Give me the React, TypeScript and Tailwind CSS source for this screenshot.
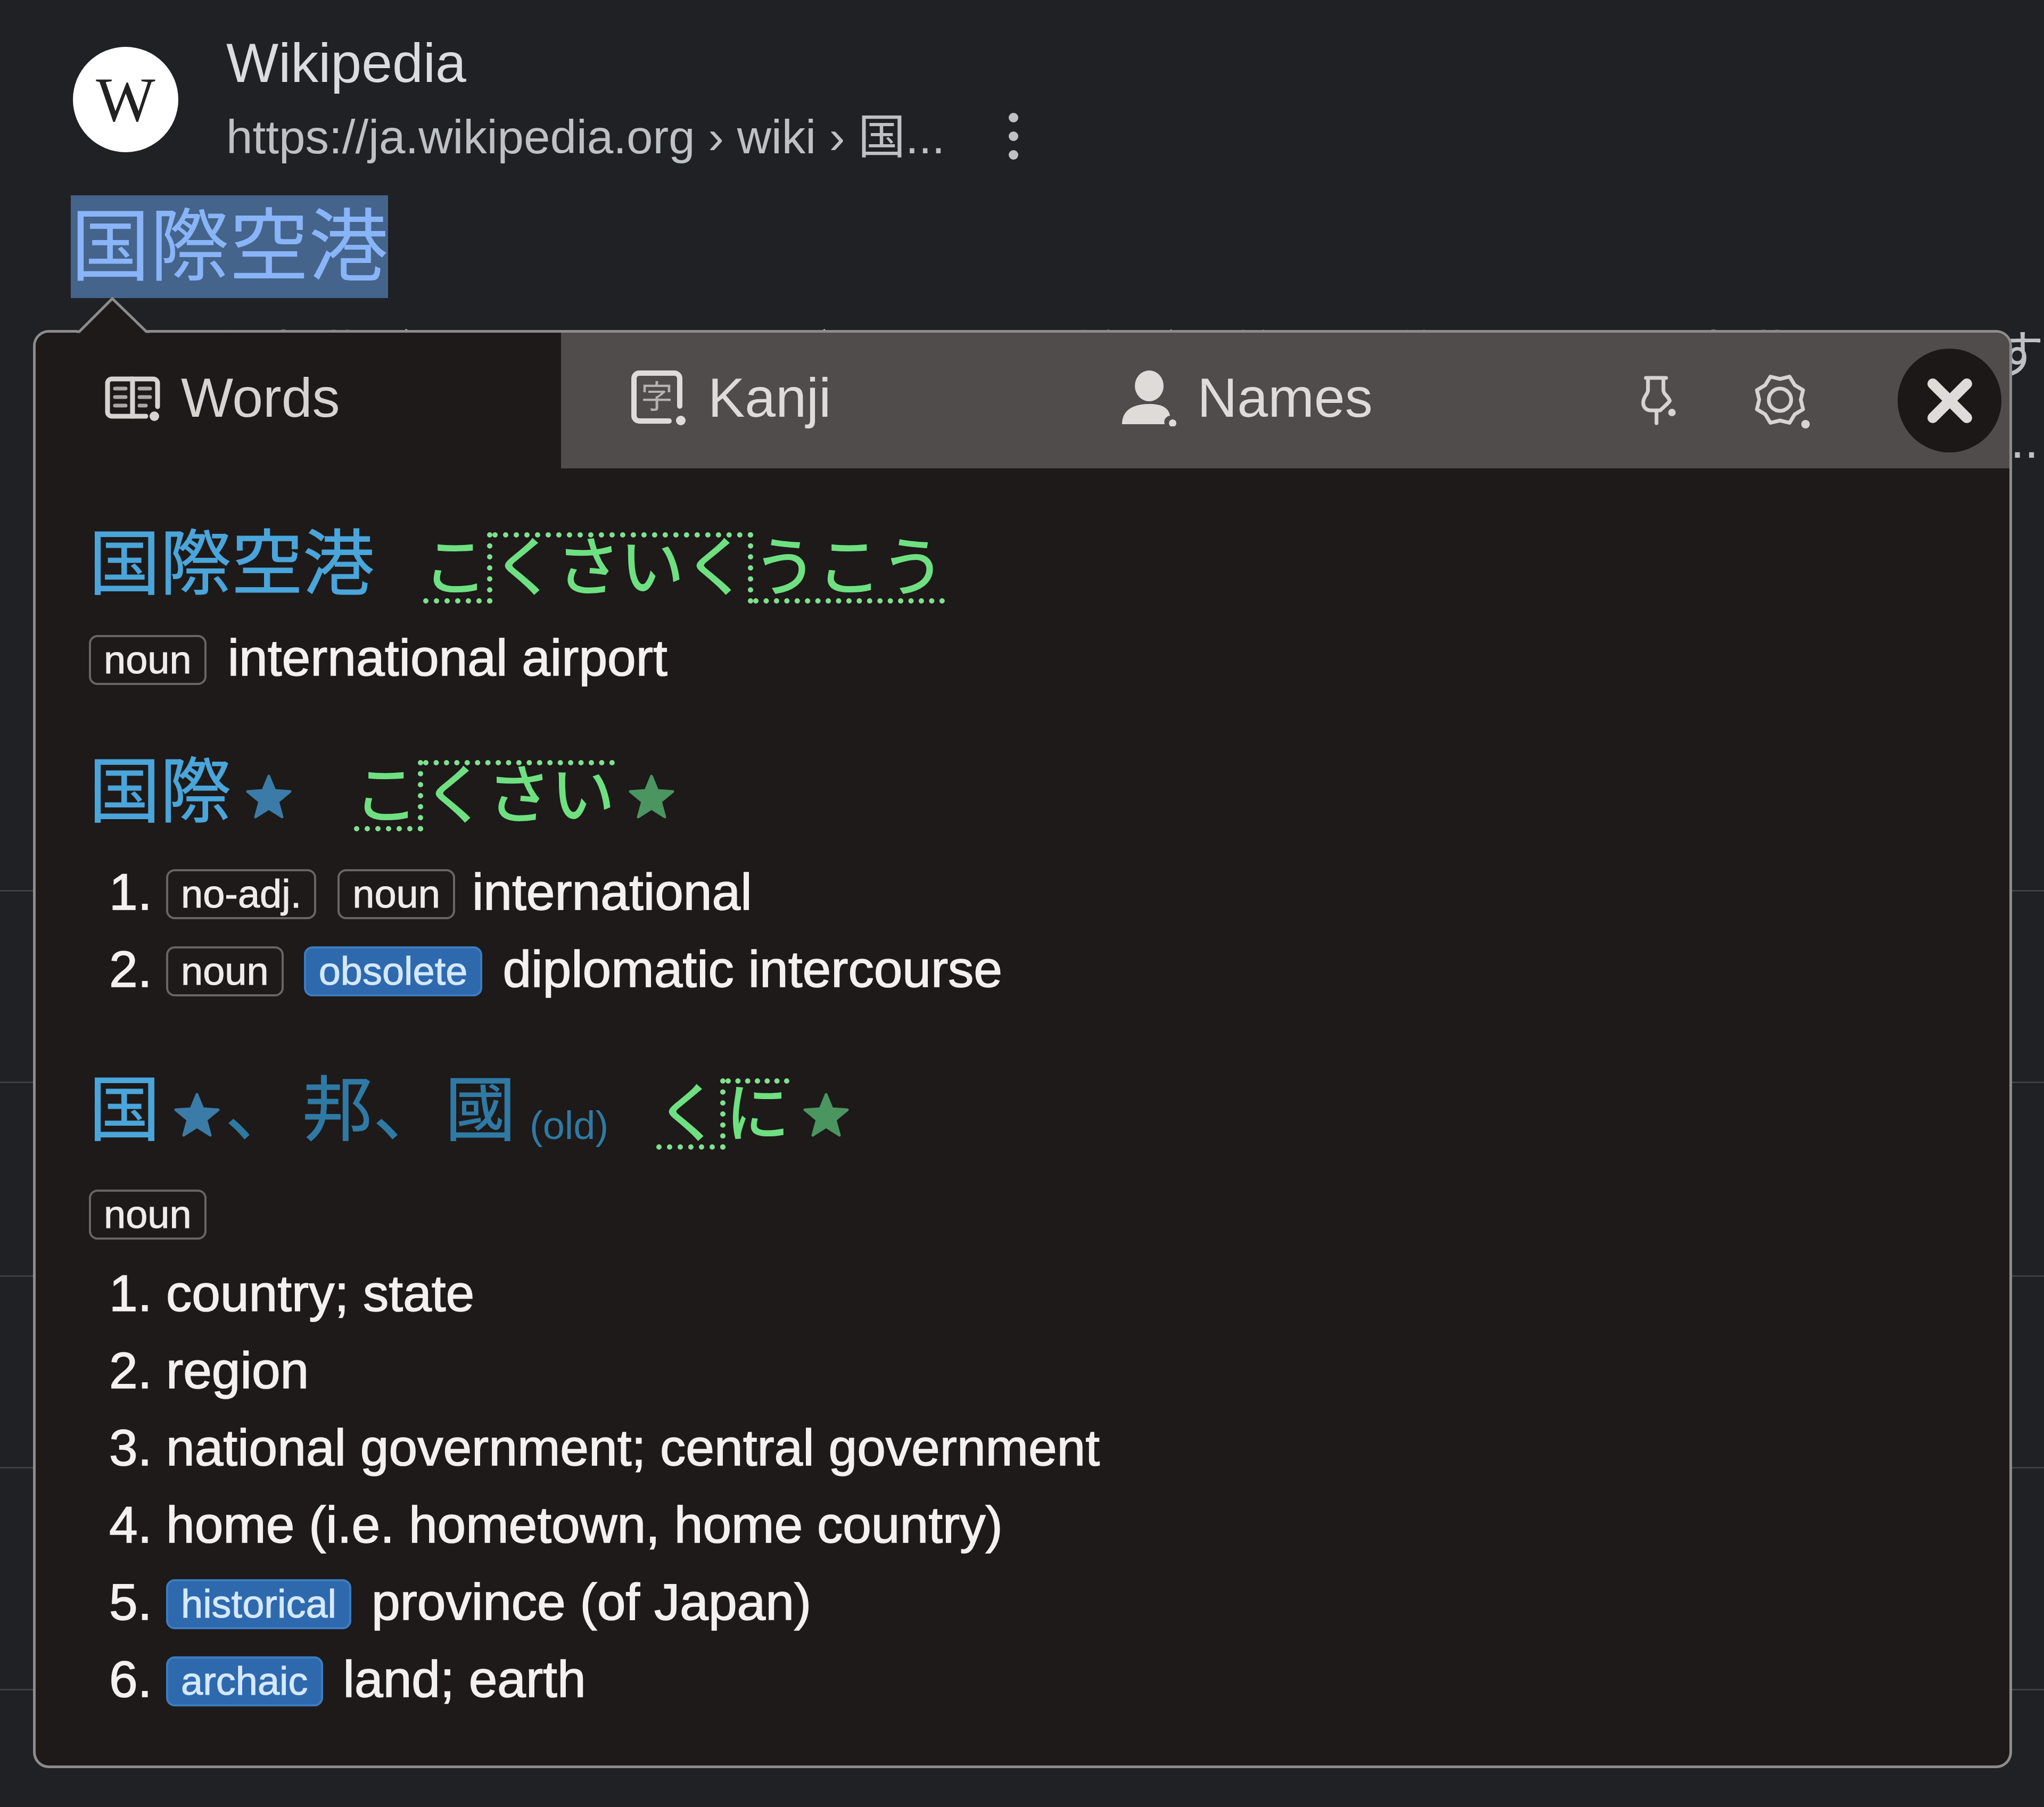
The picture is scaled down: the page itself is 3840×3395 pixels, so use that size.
import React from "react";

const jp = "font-['Liberation_Sans','Noto_Sans_CJK_JP',sans-serif]";
const kanjiMain = "text-[134px] leading-[120px] text-[#4aa5da] [-webkit-text-stroke:1px_#4aa5da]";
const kanjiDim = "text-[133px] leading-[120px] text-[#2f7aa5] [-webkit-text-stroke:1px_#2f7aa5]";

function Star({ color, className = "" }: { color: string; className?: string }) {
  return (
    <svg width="90" height="90" viewBox="0 0 90 90" className={className}>
      <path
        d="M45 6 L56 33 L85 35 L62 54 L70 83 L45 67 L20 83 L28 54 L5 35 L34 33 Z"
        fill={color}
        stroke={color}
        strokeWidth="5"
        strokeLinejoin="round"
      />
    </svg>
  );
}

function Tag({ children, blue = false }: { children: React.ReactNode; blue?: boolean }) {
  return (
    <span
      className={
        "inline-flex h-[94px] shrink-0 translate-y-[3px] items-center rounded-[16px] border-[4px] px-[24px] text-[74px] leading-none [-webkit-text-stroke:1px_currentColor] " +
        (blue
          ? "border-[#3d7cc0] bg-[#2e69ae] text-[#d5e8ff]"
          : "border-[#696563] text-[#eeecea]")
      }
    >
      {children}
    </span>
  );
}

function Row({ n, children }: { n?: string; children: React.ReactNode }) {
  return (
    <li className="flex h-[145px] items-center gap-[38px] text-[96.5px] text-[#f3f1f0] [-webkit-text-stroke:1.5px_#f3f1f0]">
      <span className="-mr-[38px] w-[145px] shrink-0 pl-[38px]">{n}</span>
      {children}
    </li>
  );
}

function Reading({ parts }: { parts: [string, string][] }) {
  return (
    <span className="flex text-[120px] leading-[114px] text-[#6fe082] [-webkit-text-stroke:2px_#6fe082]">
      {parts.map(([text, cls], i) => (
        <span key={i} className={"block h-[134px] [-webkit-text-stroke:2px_#6fe082] " + cls}>
          {text}
        </span>
      ))}
    </span>
  );
}

const low = "border-b-[10px] border-r-[10px] border-dotted border-[#7fe08e] pt-[10px]";
const high = "border-t-[10px] border-dotted border-[#7fe08e]";
const lowEnd = "border-b-[10px] border-dotted border-[#7fe08e] pt-[10px]";
const highEnd = "border-t-[10px] border-r-[10px] border-dotted border-[#7fe08e]";

export default function App() {
  return (
    <div className={"relative h-[3395px] w-[3840px] overflow-hidden bg-[#202124] " + jp}>
      {/* page behind the popup */}
      <div className="flex pl-[137px] pt-[53px]">
        <div className="mt-[35px] flex h-[198px] w-[198px] shrink-0 items-center justify-center rounded-full bg-white font-['Liberation_Serif',serif] text-[118px] text-[#222]">
          W
        </div>
        <div className="ml-[90px]">
          <div className="h-[130px] text-[104px] leading-[130px] text-[#dadce0]">Wikipedia</div>
          <div className="mt-[16px] flex items-center text-[89px] leading-[116px] text-[#bdc1c6]">
            <span>https://ja.wikipedia.org › wiki › 国...</span>
            <svg width="24" height="96" viewBox="0 0 24 96" className="ml-[117px]">
              <circle cx="12" cy="12" r="9" fill="#bdc1c6" />
              <circle cx="12" cy="47" r="9" fill="#bdc1c6" />
              <circle cx="12" cy="82" r="9" fill="#bdc1c6" />
            </svg>
          </div>
        </div>
      </div>
      <div className="mt-[52px] pl-[133px]">
        <span className="inline-block h-[193px] bg-[#44648b] text-[149px] leading-[193px] text-[#8ab4f8]">
          国際空港
        </span>
      </div>
      <div className="mt-[27px] text-[96px] leading-[160px] text-[#bdc1c6]">
        <p className="whitespace-nowrap text-right">
          国際空港（こくさいくうこう）は、国際線が発着し、税関を備えた空港のことです
        </p>
        <p className="whitespace-nowrap pr-[10px] text-right">...</p>
      </div>
      <div className="h-[768px] border-b-[3px] border-[#3c4043]" />
      <div className="h-[360px] border-b-[3px] border-[#3c4043]" />
      <div className="h-[364px] border-b-[3px] border-[#3c4043]" />
      <div className="h-[360px] border-b-[3px] border-[#3c4043]" />
      <div className="h-[417px] border-b-[3px] border-[#3c4043]" />

      {/* popup */}
      <div className="absolute left-[62px] top-[620px] h-[2702px] w-[3718px] rounded-[30px] border-[5px] border-[#8c8c8c] bg-[#1d1a19]">
        <svg width="150" height="72" viewBox="0 0 150 72" className="absolute left-[70px] top-[-68px]">
          <path d="M6 72 L6 66 L74 4 L142 66 L142 72 Z" fill="#1d1a19" />
          <path d="M6 66 H12 L74 4 L138 66 H144" fill="none" stroke="#8c8c8c" strokeWidth="5" />
        </svg>

        {/* tab bar */}
        <div className="flex h-[255px] items-stretch overflow-hidden rounded-t-[25px] bg-[#4f4c4b] text-[104px] text-[#dedbd9]">
          <div className="flex w-[987px] items-center gap-[34px] bg-[#1d1a19] pb-[12px] pl-[129px] text-[#d6d3d1]">
            <svg width="110" height="90" viewBox="0 0 110 90" fill="none" stroke="#d6d3d1" strokeLinecap="round">
              <path d="M50 10 H14 a8 8 0 0 0 -8 8 V72 a8 8 0 0 0 8 8 H78" strokeWidth="9" />
              <path d="M50 10 H92 a8 8 0 0 1 8 8 V62" strokeWidth="9" />
              <path d="M53 10 V80" strokeWidth="9" />
              <path d="M20 28 H40 M20 44 H40 M20 60 H40 M66 28 H86 M66 44 H86 M66 60 H78" strokeWidth="7" stroke="#a9a6a4" />
              <circle cx="94" cy="80" r="9" fill="#d6d3d1" stroke="none" />
            </svg>
            <span>Words</span>
          </div>
          <div className="flex items-center gap-[40px] pb-[12px] pl-[131px]">
            <svg width="105" height="108" viewBox="0 0 105 108" fill="none">
              <path d="M92 70 V18 a10 10 0 0 0 -10 -10 H16 a10 10 0 0 0 -10 10 V88 a10 10 0 0 0 10 10 H72" stroke="#dedbd9" strokeWidth="10" strokeLinecap="round" />
              <text x="49" y="74" textAnchor="middle" fontSize="60" fill="#b5b2b0" fontFamily="Noto Sans CJK JP">字</text>
              <circle cx="94" cy="97" r="9" fill="#dedbd9" />
            </svg>
            <span>Kanji</span>
          </div>
          <div className="ml-[545px] flex items-center gap-[37px] pb-[12px]">
            <svg width="106" height="108" viewBox="0 0 106 108">
              <ellipse cx="53" cy="32" rx="27" ry="29" fill="#dedbd9" />
              <path d="M2 104 C2 78 22 66 53 66 C78 66 90 74 92 88 A12 12 0 0 0 82 104 Z" fill="#dedbd9" />
              <circle cx="97" cy="102" r="7" fill="#dedbd9" />
            </svg>
            <span>Names</span>
          </div>
          <div className="ml-auto flex items-center pr-[15px]">
            <svg width="70" height="96" viewBox="0 0 70 96" fill="none" stroke="#d6d3d1" strokeWidth="7" strokeLinecap="round" strokeLinejoin="round">
              <path d="M9 5 H47 M13 5 V28 C13 36 4 40 4 52 C4 60 10 66 18 66 H36 C42 60 50 54 54 48 C50 38 42 36 42 28 V5 M29 66 V90" />
              <circle cx="58" cy="70" r="7" fill="#d6d3d1" stroke="none" />
            </svg>
            <svg width="108" height="104" viewBox="0 0 108 104" fill="none" stroke="#d6d3d1" strokeWidth="7" strokeLinejoin="round" className="ml-[139px]">
              <path d="M91 50 L95.4 68 L79.6 77.6 L70 93.4 L52 89 L34 93.4 L24.4 77.6 L8.6 68 L13 50 L8.6 32 L24.4 22.4 L34 6.6 L52 11 L70 6.6 L79.6 22.4 L95.4 32 Z" />
              <circle cx="52" cy="50" r="21" />
              <circle cx="100" cy="96" r="8" fill="#d6d3d1" stroke="none" />
            </svg>
            <div className="ml-[165px] flex h-[195px] w-[195px] items-center justify-center rounded-full bg-[#1b1817]">
              <svg width="84" height="84" viewBox="0 0 84 84" stroke="#dedbd9" strokeWidth="20" strokeLinecap="round">
                <path d="M10 10 L74 74 M74 10 L10 74" />
              </svg>
            </div>
          </div>
        </div>

        {/* results */}
        <div className="pl-[100px] pt-[120px]">
          <div className="flex h-[134px] items-start">
            <span className={kanjiMain}>国際空港</span>
            <span className="ml-[92px]">
              <Reading parts={[["こ", low], ["くさいく", highEnd], ["うこう", lowEnd]]} />
            </span>
          </div>
          <div className="mt-[32px] flex h-[141px] items-center gap-[40px] text-[96.5px] text-[#f3f1f0] [-webkit-text-stroke:1.5px_#f3f1f0]">
            <Tag>noun</Tag>
            <span>international airport</span>
          </div>

          <div className="mt-[121px] flex h-[134px] items-start">
            <span className={kanjiMain}>国際</span>
            <Star color="#3b7ba8" className="ml-[25px] mt-[24px]" />
            <span className="ml-[115px]">
              <Reading parts={[["こ", low], ["くさい", high]]} />
            </span>
            <Star color="#4a9560" className="ml-[24px] mt-[24px]" />
          </div>
          <ol className="mt-[42px]">
            <Row n="1.">
              <span className="-mr-[6px] flex gap-[40px]">
                <Tag>no-adj.</Tag>
                <Tag>noun</Tag>
              </span>
              <span>international</span>
            </Row>
            <Row n="2.">
              <span className="flex gap-[38px]">
                <Tag>noun</Tag>
                <Tag blue>obsolete</Tag>
              </span>
              <span>diplomatic intercourse</span>
            </Row>
          </ol>

          <div className="mt-[132px] flex h-[134px] items-start">
            <span className={kanjiMain}>国</span>
            <Star color="#3b7ba8" className="ml-[24px] mt-[24px]" />
            <span className={"ml-[8px] " + kanjiDim}>、</span>
            <span className={"ml-[12px] " + kanjiDim}>邦、</span>
            <span className={"ml-[2px] " + kanjiDim}>國</span>
            <span className="ml-[26px] mt-[44px] text-[74px] leading-[90px] text-[#2f7aa5]">(old)</span>
            <span className="ml-[90px]">
              <Reading parts={[["く", low], ["に", high]]} />
            </span>
            <Star color="#4a9560" className="ml-[24px] mt-[24px]" />
          </div>
          <div className="mt-[57px] flex h-[124px] items-center">
            <Tag>noun</Tag>
          </div>
          <ol className="mt-[17px]">
            <Row n="1.">country; state</Row>
            <Row n="2.">region</Row>
            <Row n="3.">national government; central government</Row>
            <Row n="4.">home (i.e. hometown, home country)</Row>
            <Row n="5.">
              <Tag blue>historical</Tag>
              <span>province (of Japan)</span>
            </Row>
            <Row n="6.">
              <Tag blue>archaic</Tag>
              <span>land; earth</span>
            </Row>
          </ol>
        </div>
      </div>
    </div>
  );
}
